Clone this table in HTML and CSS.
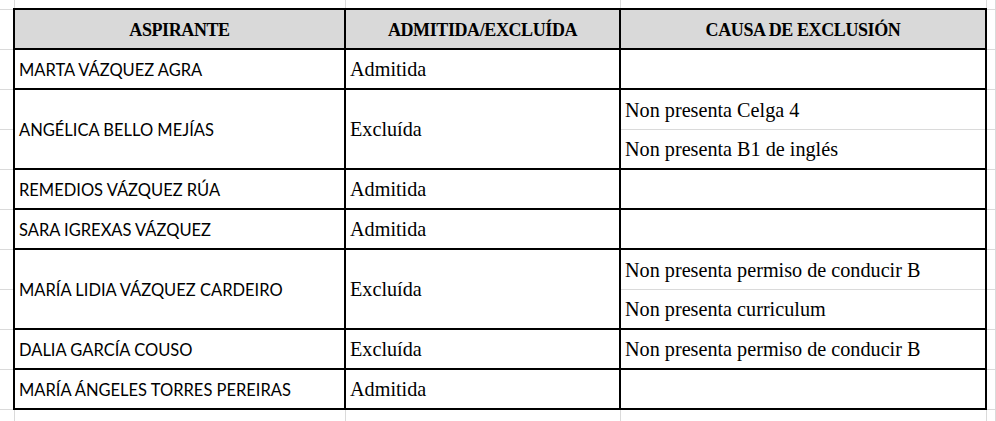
FILE: index.html
```html
<!DOCTYPE html>
<html lang="gl">
<head>
<meta charset="utf-8">
<title>Aspirantes</title>
<link rel="stylesheet" href="styles.css">
</head>
<body>
<div class="sheet">
  <div class="cell hd">ASPIRANTE</div>
  <div class="cell hd">ADMITIDA/EXCLUÍDA</div>
  <div class="cell hd">CAUSA DE EXCLUSIÓN</div>

  <div class="cell name">MARTA VÁZQUEZ AGRA</div>
  <div class="cell status">Admitida</div>
  <div class="cell cause"></div>

  <div class="cell name">ANGÉLICA BELLO MEJÍAS</div>
  <div class="cell status">Excluída</div>
  <div class="cell causes">
    <div class="line">Non presenta Celga 4</div>
    <div class="line">Non presenta B1 de inglés</div>
  </div>

  <div class="cell name">REMEDIOS VÁZQUEZ RÚA</div>
  <div class="cell status">Admitida</div>
  <div class="cell cause"></div>

  <div class="cell name">SARA IGREXAS VÁZQUEZ</div>
  <div class="cell status">Admitida</div>
  <div class="cell cause"></div>

  <div class="cell name">MARÍA LIDIA VÁZQUEZ CARDEIRO</div>
  <div class="cell status">Excluída</div>
  <div class="cell causes">
    <div class="line">Non presenta permiso de conducir B</div>
    <div class="line">Non presenta curriculum</div>
  </div>

  <div class="cell name">DALIA GARCÍA COUSO</div>
  <div class="cell status">Excluída</div>
  <div class="cell cause">Non presenta permiso de conducir B</div>

  <div class="cell name">MARÍA ÁNGELES TORRES PEREIRAS</div>
  <div class="cell status">Admitida</div>
  <div class="cell cause"></div>
</div>
</body>
</html>
```
FILE: styles.css
```css
html, body {
  margin: 0;
  height: 421px;
}

body {
  background-color: #fff;
  background-image:
    linear-gradient(#dadada, #dadada),
    linear-gradient(#dadada, #dadada),
    linear-gradient(#dadada, #dadada),
    linear-gradient(#dadada, #dadada),
    linear-gradient(#dadada, #dadada),
    repeating-linear-gradient(to bottom, transparent 0 9px, #dadada 9px 10px, transparent 10px 40px);
  background-size: 1px 100%, 1px 100%, 1px 100%, 1px 100%, 1px 100%, 100% 100%;
  background-position: 14px 0, 345px 0, 620px 0, 986px 0, 995px 0, 0 0;
  background-repeat: no-repeat;
  font-family: "Liberation Serif", "Times New Roman", serif;
  color: #000;
}

.sheet {
  display: grid;
  grid-template-columns: 331px 275px 366px;
  grid-template-rows: 40px 40px 80px 40px 40px 80px 40px 40px;
  width: max-content;
  margin: 8px 0 0 13px;
  border-top: 2px solid #000;
  border-left: 2px solid #000;
}

.cell {
  box-sizing: border-box;
  display: flex;
  align-items: center;
  padding: 1px 0 0 4px;
  background: #fff;
  border-right: 2px solid #000;
  border-bottom: 2px solid #000;
  white-space: nowrap;
}

.hd {
  justify-content: center;
  padding: 2px 0 0 0;
  background: #d9d9d9;
  font-weight: bold;
  font-size: 18px;
  letter-spacing: -0.4px;
}

.name {
  font-family: "Lato", "Liberation Sans", sans-serif;
  font-size: 16.5px;
}

.status, .cause, .line {
  font-size: 20.2px;
}

.causes {
  flex-direction: column;
  align-items: stretch;
  padding: 0;
}

.line {
  box-sizing: border-box;
  display: flex;
  align-items: center;
  height: 40px;
  padding: 1px 0 0 4px;
  border-bottom: 1px solid #dadada;
}

.line:last-child {
  height: 38px;
  border-bottom: none;
}
```
